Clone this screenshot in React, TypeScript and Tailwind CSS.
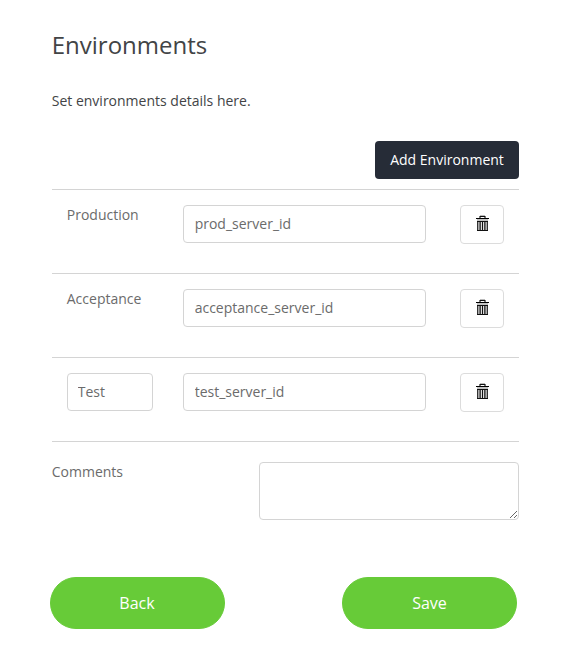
import React from 'react';

function Trash() {
  return (
    <svg width="13" height="16" viewBox="0 0 13 16" fill="none" stroke="#000" shapeRendering="crispEdges">
      <path d="M4 .5h5" stroke="#bbb" />
      <path d="M4 1.5h5" stroke="#111" />
      <path d="M3.5 1v2M9.5 1v2" stroke="#777" />
      <path d="M4.5 2v1M8.5 2v1" stroke="#777" />
      <path d="M0 3.5h13" />
      <path d="M1 4.5h11M1 5.5h11" stroke="#c4c4c4" />
      <path d="M1 6.5h11M1 15.5h11" stroke="#111" />
      <path d="M1.5 7v8M11.5 7v8" stroke="#333" />
      <path d="M2.5 7v8M10.5 7v8" stroke="#aaa" />
      <path d="M3.5 7v8M9.5 7v8" stroke="#777" />
      <path d="M4.5 7v8M8.5 7v8" stroke="#444" />
      <path d="M5.5 7v8M7.5 7v8" stroke="#ddd" />
      <path d="M6.5 7v8" stroke="#111" />
    </svg>
  );
}

const field = 'h-[38px] rounded-[4px] border border-[#d4d4d4] bg-white pr-[10px] pb-[2px] text-sm text-[#6b6b6b] outline-none';

function Row({ name, id, editable }: { name: string; id: string; editable?: boolean }) {
  return (
    <div className="flex h-[84px] items-start border-b border-[#d4d4d4] px-[15px] pt-[15px]">
      <div className="w-[116.4px] shrink-0">
        {editable ? <input className={`${field} w-[86px] pl-[10px]`} defaultValue={name} /> : <div className="leading-5">{name}</div>}
      </div>
      <input className={`${field} w-[243px] shrink-0 pl-[10.5px]`} defaultValue={id} />
      <button className="ml-auto flex h-[39px] w-[44px] items-center justify-center rounded-[4px] border border-[#dcdcdc] pb-[3px] pl-px">
        <Trash />
      </button>
    </div>
  );
}

export default function App() {
  return (
    <div className="h-[667px] bg-white pl-[51.75px] pr-12 pt-[29px] font-['Open_Sans',sans-serif] text-sm text-[#6b6b6b] antialiased">
      <h1 className="text-[24px] leading-[32px] text-[#424446]">Environments</h1>
      <p className="mt-[30px] leading-5 text-[#424446]">Set environments details here.</p>
      <div className="mt-[30px] flex justify-end">
        <button className="h-[38px] w-[144px] rounded-[4px] bg-[#262c37] text-white">Add Environment</button>
      </div>
      <div className="mt-[10px] border-t border-[#d4d4d4]">
        <Row name="Production" id="prod_server_id" />
        <Row name="Acceptance" id="acceptance_server_id" />
        <Row name="Test" id="test_server_id" editable />
      </div>
      <div className="mt-5 flex justify-between">
        <label className="leading-5">Comments</label>
        <textarea className="h-[58px] w-[260px] rounded-[4px] border border-[#d4d4d4] outline-none" />
      </div>
      <div className="-ml-[1.75px] mr-0.5 mt-[57px] flex justify-between text-base text-white">
        <button className="h-[52px] w-[175px] rounded-full border border-[#67cb38] bg-[#67cb38] pr-px">Back</button>
        <button className="h-[52px] w-[175px] rounded-full border border-[#67cb38] bg-[#67cb38]">Save</button>
      </div>
    </div>
  );
}
